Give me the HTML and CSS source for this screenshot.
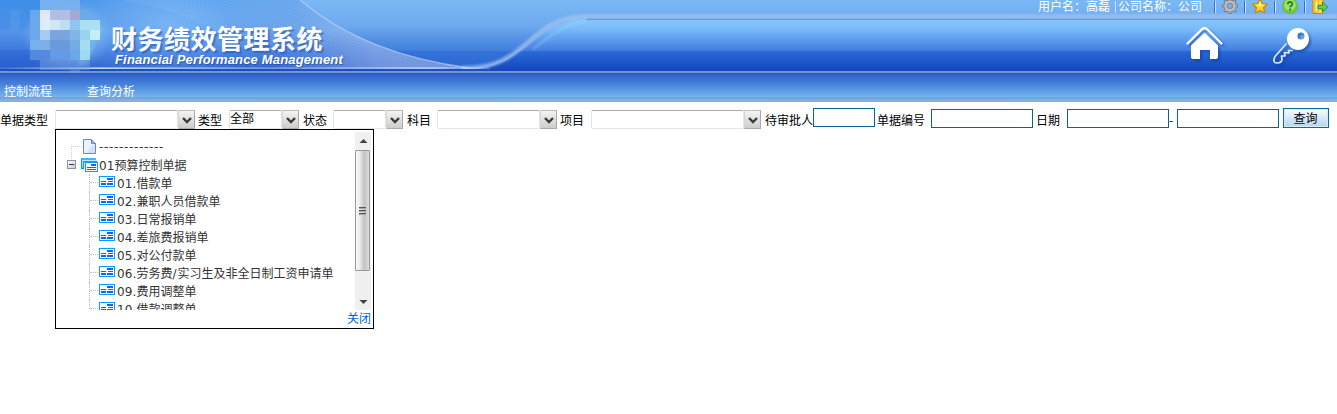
FILE: index.html
```html
<!DOCTYPE html>
<html lang="zh-CN">
<head>
<meta charset="utf-8">
<title>财务绩效管理系统</title>
<link rel="stylesheet" href="styles.css">
</head>
<body>
<header class="banner">
  <svg class="banner-art" width="1337" height="73" viewBox="0 0 1337 73" aria-hidden="true">
    <defs>
      <linearGradient id="sky" x1="0" y1="0" x2="0" y2="1"><stop offset="0" stop-color="#7ab8f5"/><stop offset=".35" stop-color="#6ea9ee"/><stop offset=".69" stop-color="#417fdc"/><stop offset=".71" stop-color="#3472d8"/><stop offset="1" stop-color="#2a63d2"/></linearGradient>
      <linearGradient id="panel" gradientUnits="userSpaceOnUse" x1="0" y1="19" x2="0" y2="71"><stop offset="0" stop-color="#86c8ff"/><stop offset=".2" stop-color="#78b9f8"/><stop offset=".6" stop-color="#427fe0"/><stop offset=".63" stop-color="#2869d5"/><stop offset="1" stop-color="#1545bf"/></linearGradient>
      <linearGradient id="left" x1="0" y1="0" x2="0" y2="1"><stop offset="0" stop-color="#3f8fe9"/><stop offset=".45" stop-color="#4c8fe6"/><stop offset=".75" stop-color="#346fd9"/><stop offset="1" stop-color="#2a5fcd"/></linearGradient>
      <radialGradient id="glow" gradientUnits="userSpaceOnUse" cx="170" cy="22" r="130" gradientTransform="matrix(1 0 0 .5 0 12)"><stop offset="0" stop-color="#8cc3fa" stop-opacity=".7"/><stop offset="1" stop-color="#8cc3fa" stop-opacity="0"/></radialGradient>
      <linearGradient id="shine" x1="0" x2="1" y1="0" y2="0"><stop offset="0" stop-color="#fff" stop-opacity=".1"/><stop offset=".2" stop-color="#fff" stop-opacity=".9"/><stop offset=".55" stop-color="#fff" stop-opacity=".4"/><stop offset=".88" stop-color="#fff" stop-opacity=".8"/><stop offset="1" stop-color="#fff" stop-opacity=".2"/></linearGradient>
      <linearGradient id="meshfade" gradientUnits="userSpaceOnUse" x1="270" x2="350" y1="75" y2="15"><stop offset="0" stop-color="#fff" stop-opacity="0"/><stop offset="1" stop-color="#fff" stop-opacity=".3"/></linearGradient>
      <pattern id="mesh" width="2.5" height="2.5" patternUnits="userSpaceOnUse" patternTransform="rotate(38)"><rect width="2.5" height="1" fill="#fff" opacity=".13"/></pattern>
      <filter id="soft" x="-5%" y="-30%" width="110%" height="160%"><feGaussianBlur stdDeviation="1.3"/></filter>
      <filter id="mist" x="-50%" y="-50%" width="200%" height="200%"><feGaussianBlur stdDeviation="4"/></filter>
    </defs>
    <rect width="1337" height="73" fill="url(#sky)"/>
    <path d="M0 0H300C332 27 385 57 470 68H0Z" fill="url(#left)"/>
    <path d="M0 0H300C332 27 385 57 470 68H0Z" fill="url(#glow)"/>
    <path d="M120 0H300C332 27 385 57 470 68H250C230 30 180 10 120 0Z" fill="url(#mesh)"/>
    <path d="M200 0H300C332 27 385 57 470 68H250C230 30 230 10 200 0Z" fill="url(#meshfade)"/>
    <path d="M300 0C332 27 385 57 470 68" fill="none" stroke="#c5dcf8" stroke-width="1.3" opacity=".6"/>
    <path d="M455 70C531 73 527 19 590 19H1337V72H455Z" fill="url(#panel)"/>
    <path d="M462 68C530 70 526 16.500 587 16.500H1337" fill="none" stroke="#a6c5ee" stroke-width="4.500" opacity=".7" filter="url(#soft)"/>
    <path d="M462 68.500C528 70 530 19 588 17.500" fill="none" stroke="#b9d6f8" stroke-width="1.200" opacity=".3"/>
    <path d="M586 19.500H1337" stroke="#4da3f0"/>
    <path d="M533 49C554 34 563 24 587 21.500" fill="none" stroke="#a3d6ff" stroke-width="2.500" opacity=".35" filter="url(#soft)"/>
    <rect y="69" width="490" height="2" fill="#1d4fc4"/>
    <rect y="67.500" width="490" height="1.300" fill="url(#shine)"/>
    <rect y="71" width="1337" height="2" fill="#7595cd"/>
    <!-- logo mosaic on a 10px grid -->
    <ellipse cx="68" cy="35" rx="40" ry="30" fill="#91c4f4" opacity=".38" filter="url(#mist)"/>
    <path d="M100 25L103 30L87 63L78 66V28Z" fill="#81cdf0" opacity=".4" filter="url(#soft)"/>
    <g opacity=".95">
      <path fill="#6caaea" d="M30 10h10v10H30zM30 20h10v10H30zM30 30h10v10H30zM80 10h10v10H80zM70 50h10v10H70z"/>
      <path fill="#78b3ef" d="M40 0h40v10H40zM30 40h10v10H30z"/>
      <path fill="#e8edf8" d="M40 10h10v10H40z"/><path fill="#b8c0e2" d="M50 10h20v10H50z"/><path fill="#a4abd6" d="M70 10h10v10H70z"/>
      <path fill="#e2f2fa" d="M40 20h10v10H40z"/><path fill="#d7eaf8" d="M50 20h10v10H50z"/><path fill="#bfe5f4" d="M60 20h10v10H60z"/><path fill="#91c8ed" d="M70 20h10v10H70z"/><path fill="#afe3f5" d="M80 20h20v10H80z"/>
      <path fill="#a9cff3" d="M40 30h10v10H40z"/><path fill="#7ba6de" d="M50 30h20v10H50z"/><path fill="#83b6e8" d="M70 30h10v10H70z"/><path fill="#9ad5f1" d="M80 30h10v10H80z"/><path fill="#c6f4f8" d="M90 30h10v10H90z"/>
      <path fill="#80b0e8" d="M40 40h10v10H40z"/><path fill="#6b9bdc" d="M50 40h20v10H50z"/><path fill="#78aee5" d="M70 40h10v10H70z"/><path fill="#abe0f2" d="M80 40h10v10H80z"/>
      <path fill="#568ae0" d="M30 50h20v10H30z"/><path fill="#659ce5" d="M50 50h20v10H50z"/><path fill="#a1dcf1" d="M80 50h10v10H80z"/>
      <path fill="#78a2e2" opacity=".5" d="M40 60h30v10H40zM70 60h20v10H70zM70 70h10v3H70z"/>
    </g>
    <path fill="#9cd2fb" opacity=".1" d="M0 30h10v20H0zM10 10h10v40H10zM20 30h10v20H20z"/>
  </svg>
  <div class="brand">
    <h1 class="brand-title">财务绩效管理系统</h1>
    <p class="brand-sub">Financial Performance Management</p>
  </div>
  <div class="banner-right">
    <div class="userbar">
      <span class="user">用户名：高磊</span><i class="sep"></i><span class="company">公司名称：公司</span>
      <i class="sep"></i>
      <svg class="tool" viewBox="0 0 16 16"><path d="M8 0V16M0 8H16M2.300 2.300L13.700 13.700M13.700 2.300L2.300 13.700" stroke="#777b84" stroke-width="3"/><circle cx="8" cy="8" r="4.300" fill="none" stroke="#777b84" stroke-width="4"/><path d="M8 1V15M1 8H15M3 3L13 13M13 3L3 13" stroke="#b4b7bc" stroke-width="1.500"/><circle cx="8" cy="8" r="4.300" fill="none" stroke="#b9bcc1" stroke-width="2.600"/><circle cx="8" cy="8" r="2.600" fill="#7ab0ef" stroke="#777b84" stroke-width=".8"/></svg>
      <i class="sep"></i>
      <svg class="tool" viewBox="0 0 16 16"><path d="M8 .8L10.200 5.500L15.400 6.100L11.600 9.700L12.800 15L8 12.500L3.200 15L4.400 9.700L.6 6.100L5.800 5.500Z" fill="#ffd21e" stroke="#cf8500" stroke-width="1.200" stroke-linejoin="round"/><path d="M8 2.800L9.500 6.400L13.200 6.900L8 8.800L2.700 6.900L6.500 6.400Z" fill="#fff176"/></svg>
      <i class="sep"></i>
      <svg class="tool" viewBox="0 0 16 16"><circle cx="8" cy="8" r="7.500" fill="#78c83f" stroke="#6ab646"/><circle cx="8" cy="7" r="5.700" fill="#a5de68"/><path d="M5.800 6.200C5.800 3.200 10.400 3.300 10.400 6C10.400 7.800 8.100 7.700 8.100 9.300" fill="none" stroke="#168b21" stroke-width="1.900"/><rect x="7.100" y="10.600" width="2" height="2" fill="#168b21"/></svg>
      <i class="sep"></i>
      <svg class="tool" viewBox="0 0 16 16"><path d="M1 1H11V15.500H1Z" fill="#ffd83b" stroke="#c98500"/><path d="M3 3L6 1V13L3 15Z" fill="#fff08a" stroke="#d79a0e" stroke-width=".7"/><path d="M6 7.300H10.500V4.200L15.700 9L10.500 13.800V10.800H6Z" fill="#6acb55" stroke="#258b36"/></svg>
    </div>
    <div class="shortcuts">
      <svg class="home" viewBox="0 0 40 36"><path d="M2.500 17.500L17 3.200Q19.500 1.200 22 3.200L36.500 17.500" fill="none" stroke="#fff" stroke-width="2.300" stroke-linecap="round"/><path d="M19.500 6.500L33 19.500V31Q33 33 31 33H25V24H15V33H8Q6 33 6 31V19.500Z" fill="#fff"/></svg>
      <svg class="key" viewBox="0 0 40 40"><path d="M14 17L3 29.500Q0 36 5 36Q10 36 10 32L9.500 29L13 29L12.500 25.500L17 26L16.500 23.500H20" fill="none" stroke="#dce8fb" stroke-width="1.700" stroke-linecap="round" stroke-linejoin="round"/><path fill-rule="evenodd" fill="#fff" d="M26 1A11 11 0 1 1 26 23A11 11 0 1 1 26 1ZM29 5.500A3.500 3.500 0 1 0 29 12.500A3.500 3.500 0 1 0 29 5.500Z"/></svg>
    </div>
  </div>
</header>
<nav class="nav"><a class="nav-item">控制流程</a><a class="nav-item">查询分析</a></nav>

<form class="filters">
  <label class="lab">单据类型</label>
  <div class="combo w140"><span class="combo-text"></span><span class="arrow"><svg viewBox="0 0 10 8"><path d="M1 2L5 6L9 2" /></svg></span>
    <div class="dropdown">
      <div class="scroller">
        <ul class="tree">
          <li class="row root first"><svg class="page" viewBox="0 0 13 15"><path d="M.5.5H8.500L12.500 4.500V14.500H.5Z" fill="#e9f3ff" stroke="#7186b5"/><path d="M8.500.5V4.500H12.500" fill="#8bb5ee" stroke="#7186b5"/><path d="M10 6L12 5V14H3Z" fill="#cfe2fa"/></svg><span class="dashes">-------------</span></li>
          <li class="row root"><i class="minus"></i><svg class="folder" viewBox="0 0 17 14"><path d="M0 1H15M.5 1V10.500H3M2.500 10V3.500H16" fill="none" stroke="#0a9bff" stroke-width="1.400"/><rect x="4.500" y="4.500" width="12" height="9" fill="#fff" stroke="#0a9bff"/><path d="M10 6h5v2h-5zM6 9h9v1H6zM6 11h9v1H6z" fill="#0a64ff"/></svg><span><b class="num">01</b>预算控制单据</span></li>
          <li class="row leaf"><svg class="doc"><use href="#doc"/></svg><span><b class="num">01.</b>借款单</span></li>
          <li class="row leaf"><svg class="doc"><use href="#doc"/></svg><span><b class="num">02.</b>兼职人员借款单</span></li>
          <li class="row leaf"><svg class="doc"><use href="#doc"/></svg><span><b class="num">03.</b>日常报销单</span></li>
          <li class="row leaf"><svg class="doc"><use href="#doc"/></svg><span><b class="num">04.</b>差旅费报销单</span></li>
          <li class="row leaf"><svg class="doc"><use href="#doc"/></svg><span><b class="num">05.</b>对公付款单</span></li>
          <li class="row leaf"><svg class="doc"><use href="#doc"/></svg><span><b class="num">06.</b>劳务费<b class="num slash">/</b>实习生及非全日制工资申请单</span></li>
          <li class="row leaf"><svg class="doc"><use href="#doc"/></svg><span><b class="num">09.</b>费用调整单</span></li>
          <li class="row leaf"><svg class="doc"><use href="#doc"/></svg><span><b class="num">10.</b>借款调整单</span></li>
        </ul>
        <div class="scrollbar">
          <svg class="sb-arrow" viewBox="0 0 16 18"><path d="M4.500 11L8.500 7L12.500 11Z" fill="#444"/></svg>
          <div class="thumb"><i></i><i></i><i></i></div>
          <svg class="sb-arrow end" viewBox="0 0 16 18"><path d="M4.500 8L8.500 12L12.500 8Z" fill="#444"/></svg>
        </div>
      </div>
      <a class="close">关闭</a>
    </div>
  </div>
  <label class="lab l-type">类型</label>
  <div class="combo w70"><span class="combo-text">全部</span><span class="arrow"><svg viewBox="0 0 10 8"><path d="M1 2L5 6L9 2"/></svg></span></div>
  <label class="lab l-state">状态</label>
  <div class="combo w70"><span class="combo-text"></span><span class="arrow"><svg viewBox="0 0 10 8"><path d="M1 2L5 6L9 2"/></svg></span></div>
  <label class="lab l-state">科目</label>
  <div class="combo w120"><span class="combo-text"></span><span class="arrow"><svg viewBox="0 0 10 8"><path d="M1 2L5 6L9 2"/></svg></span></div>
  <label class="lab l-project">项目</label>
  <div class="combo w170"><span class="combo-text"></span><span class="arrow"><svg viewBox="0 0 10 8"><path d="M1 2L5 6L9 2"/></svg></span></div>
  <label class="lab l-approver">待审批人</label>
  <input class="field approver" type="text">
  <label class="lab l-no">单据编号</label>
  <input class="field" type="text">
  <label class="lab l-date">日期</label>
  <input class="field" type="text">
  <span class="dash">-</span>
  <input class="field" type="text">
  <button class="query" type="button">查询</button>
</form>
<svg class="defs" width="0" height="0"><symbol id="doc" viewBox="0 0 16 11"><rect x=".5" y=".5" width="15" height="10" fill="#fff" stroke="#0a9bff"/><path d="M8 2h6v2H8zM2 5h5v1H2zM9 5h5v1H9zM2 7h5v2H2zM8 7h6v2H8z" fill="#0a64ff"/></symbol></svg>
</body>
</html>
```
FILE: styles.css
```css
* { box-sizing: border-box; }
body { margin: 0; background: #fff; color: #000; font: 12px/18px "Noto Sans CJK SC", sans-serif; width: 1337px; height: 414px; overflow: hidden; }
.banner { position: relative; display: flex; justify-content: space-between; height: 73px; overflow: hidden; }
.banner-art { position: absolute; left: 0; top: 0; }
.brand { position: relative; padding: 24px 0 0 111px; color: #fff; }
.brand-title { margin: 0; font-size: 26px; line-height: 27px; font-weight: 700; letter-spacing: .5px; white-space: nowrap; text-shadow: 2px 2px 1px rgba(35,80,165,.5); }
.brand-sub { margin: 1px 0 0 4px; font: italic bold 13px/15px "Liberation Sans", sans-serif; letter-spacing: .17px; white-space: nowrap; text-shadow: 1px 1px 1px rgba(20,60,150,.6); }
.banner-right { position: relative; width: 299px; }
.userbar { display: flex; height: 14px; align-items: center; color: #fff; white-space: nowrap; }
.user, .company { line-height: 16px; margin-top: -2px; }
.user { width: 77px; }
.company { width: 96px; margin-left: 2px; }
.sep { width: 2px; height: 12px; background: linear-gradient(90deg, #2f6ec7 50%, #d0e5fc 50%); }
.user + .sep { width: 1px; }
.tool { width: 16px; height: 16px; margin: -2px 6px 0; flex: none; }
.shortcuts { display: flex; padding: 12px 0 0 147px; }
.home { width: 40px; height: 36px; margin-right: 47px; filter: drop-shadow(2px 2px 1px rgba(10,50,150,.5)); }
.key { width: 40px; height: 40px; filter: drop-shadow(2px 2px 1px rgba(10,50,150,.5)); flex: none; margin-top: 1px; }
.nav { display: flex; gap: 35px; height: 29px; padding: 9px 0 0 4px; color: #fff; background: linear-gradient(#214ca9 0, #2d60cb 1px, #4681da 11px, #74b5eb 24px, #6e97d5 25px, #7faee5 26px, #82b0e7 29px); }
.nav-item { line-height: 18px; }
.filters { display: flex; align-items: flex-start; height: 28px; padding-top: 6px; white-space: nowrap; }
.lab { width: 48px; margin: 3px 7px 0 0; flex: none; }
.l-type, .l-state, .l-project, .l-date { width: 24px; }
.l-type { margin-left: 3px; }
.l-state { margin-left: 4px; margin-right: 6px; }
.l-project { margin-left: 3px; margin-right: 7px; }
.l-approver { margin-left: 4px; margin-right: 0; }
.l-no { margin-left: 2px; margin-right: 6px; }
.l-date { margin-left: 3px; }
.combo { position: relative; display: flex; flex: none; height: 19px; margin-top: 2px; }
.combo-text { flex: 1; line-height: 13px; border: 1px solid #e1e5ec; border-top-color: #aaa; border-radius: 2px; }
.arrow { display: flex; align-items: center; justify-content: center; width: 17px; border: 1px solid #bbb; border-right-color: #aaa; border-bottom-color: #aaa; border-left-color: #d5d5d5; background: linear-gradient(#f4f4f4, #cfcdc8); }
.arrow svg { width: 10px; height: 8px; fill: none; stroke: #3b3b3b; stroke-width: 2.4; }
.w140 { width: 140px; } .w70 { width: 70px; } .w120 { width: 120px; } .w170 { width: 170px; }
.field { width: 102px; height: 19px; margin: 1px 0 0; padding: 0; flex: none; border: 1px solid #086591; border-radius: 0; background: #fff; }
.approver { width: 62px; margin-top: 0; }
.dash { width: 8px; margin-top: 3px; }
.query { width: 46px; height: 20px; margin: 0 0 0 4px; padding: 0 1px 0 0; border: 1px solid #0b6c9a; background: linear-gradient(#fafdff, #b2d6ed); box-shadow: inset 0 0 0 1px #dceaf3; font: 12px/18px "Noto Sans CJK SC", sans-serif; color: #000; }
.dropdown { position: absolute; left: 0; top: 19px; width: 319px; height: 200px; border: 1px solid #000; background: #fff; padding: 2px 2px 0 0; z-index: 2; }
.scroller { display: flex; height: 178px; overflow: hidden; }
.tree { flex: 1; margin: 0; padding: 6px 0 0; list-style: none; color: #333; }
.row { display: flex; align-items: center; position: relative; height: 18px; }
.row > span { line-height: 18px; }
.root { padding-left: 25px; }
.first { padding-left: 27px; }
.leaf { padding-left: 43px; }
.first::before { content: ""; position: absolute; left: 15px; top: 8px; width: 10px; height: 14px; border: dotted #ccc; border-width: 1px 0 0 1px; }
.leaf::before { content: ""; position: absolute; left: 33px; top: 0; width: 1px; height: 18px; border-left: 1px dotted #bbb; }
.leaf:last-child::before { height: 9px; }
.leaf::after { content: ""; position: absolute; left: 34px; top: 8px; width: 8px; border-top: 1px dotted #bbb; }
.page { width: 13px; height: 15px; margin: -2px 3px 0 0; }
.folder { width: 17px; height: 14px; margin-right: 1px; }
.doc { width: 16px; height: 11px; margin: -3px 2px 0 0; flex: none; }
.minus { position: absolute; left: 11px; top: 4px; width: 9px; height: 9px; border: 1px solid #8794a8; background: linear-gradient(#333, #333) center / 5px 1px no-repeat, linear-gradient(135deg, #fff, #ccc); }
.num { font: 12px/18px "DejaVu Sans", sans-serif; letter-spacing: .15px; }
.slash { letter-spacing: .9px; }
.dashes { font: 12px/18px "DejaVu Sans", sans-serif; letter-spacing: .67px; }
.scrollbar { display: flex; flex-direction: column; width: 16px; height: 178px; background: #f0f0f0; }
.sb-arrow { width: 16px; height: 18px; flex: none; }
.end { margin-top: auto; }
.thumb { display: flex; flex-direction: column; align-items: center; justify-content: center; gap: 2px; width: 15px; height: 121px; border: 1px solid #999; border-radius: 1px; background: linear-gradient(90deg, #fafafa, #eee 25%, #c3c3c3 65%, #ddd); }
.thumb i { width: 7px; height: 1px; background: #555; box-shadow: 0 1px #aaa; }
.close { display: block; margin-top: -1px; text-align: right; color: #06c; line-height: 18px; }
.defs { position: absolute; }
```
